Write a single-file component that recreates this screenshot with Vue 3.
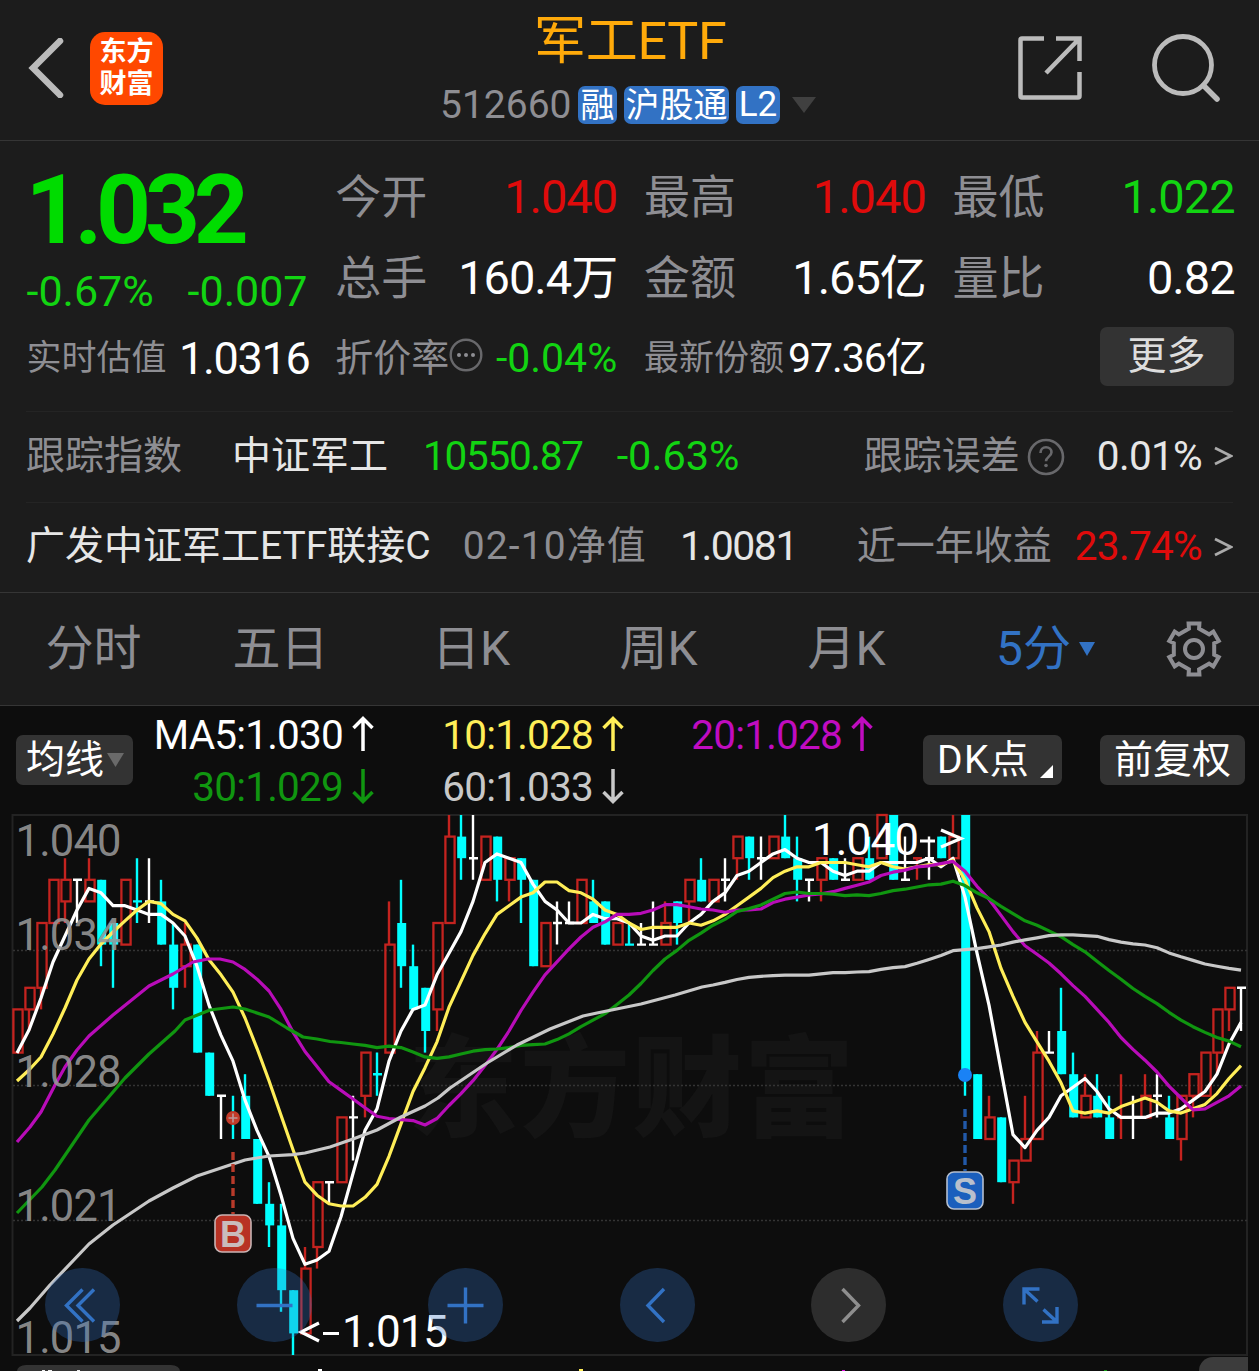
<template>
  <div class="page">
    <!-- Header -->
    <header class="header">
      <div class="header-left">
        <svg class="back" width="36" height="60" viewBox="0 0 36 60">
          <path d="M32 3L5 30l27 27" fill="none" stroke="#bbb" stroke-width="6.5" stroke-linecap="round" />
        </svg>
        <div class="logo"><span>东方</span><span>财富</span></div>
      </div>
      <div class="header-title">
        <h1>军工ETF</h1>
        <div class="code-row">
          <span class="code">512660</span>
          <span class="badge one">融</span>
          <span class="badge three">沪股通</span>
          <span class="badge two">L2</span>
          <svg class="title-arrow" width="24" height="16" viewBox="0 0 24 16">
            <path d="M0 0h24L12 16z" fill="#404040" />
          </svg>
        </div>
      </div>
      <div class="header-right">
        <svg width="66" height="66" viewBox="0 0 66 66" fill="none" stroke="#bbb" stroke-width="4.500">
          <path d="M27 3.500H5a1.500 1.500 0 0 0-1.500 1.500v56a1.500 1.500 0 0 0 1.500 1.500h56a1.500 1.500 0 0 0 1.500-1.500V37" />
          <path d="M39 3.500h23.500V26M61.500 4.500L29 38" />
        </svg>
        <svg width="70" height="70" viewBox="0 0 70 70" fill="none" stroke="#bbb" stroke-width="4.800">
          <circle cx="32" cy="32" r="28.500" />
          <path d="M52.500 52.500L66 66" stroke-width="5.500" stroke-linecap="round" />
        </svg>
      </div>
    </header>

    <!-- Quote -->
    <section class="quote">
      <div class="price-box">
        <div class="price">1.032</div>
        <div class="change"><span>-0.67%</span><span>-0.007</span></div>
      </div>
      <div v-for="item in stats" :key="item.label" class="cell">
        <span class="label">{{ item.label }}</span>
        <span class="value" :class="item.color">{{ item.value }}</span>
      </div>
      <div class="cell small">
        <span class="label">实时估值</span>
        <span class="value estimate">1.0316</span>
      </div>
      <div class="cell small">
        <span class="label discount">折价率</span>
        <svg class="more-icon" width="34" height="34" viewBox="0 0 34 34">
          <circle cx="17" cy="17" r="15.300" fill="none" stroke="#68686b" stroke-width="2.400" />
          <g fill="#8e8e93">
            <circle cx="10" cy="17" r="2" />
            <circle cx="17" cy="17" r="2" />
            <circle cx="24" cy="17" r="2" />
          </g>
        </svg>
        <span class="value green rate">-0.04%</span>
      </div>
      <div class="cell small">
        <span class="label">最新份额</span>
        <span class="value share">97.36亿</span>
      </div>
      <div class="cell end"><button class="more-btn">更多</button></div>
    </section>

    <section class="fund">
      <div class="fund-row">
        <span class="gray">跟踪指数</span>
        <span class="index-name">中证军工</span>
        <span class="green index-value">10550.87</span>
        <span class="green index-change">-0.63%</span>
        <span class="gray push">跟踪误差</span>
        <svg class="help" width="38" height="38" viewBox="0 0 38 38" fill="none">
          <circle cx="19" cy="19" r="17" stroke="#68686b" stroke-width="2.600" />
          <path d="M13.500 15c0-3.500 2.200-5.700 5.500-5.700s5.500 2.100 5.500 5c0 4.200-5.500 4.500-5.500 9" stroke="#68686b" stroke-width="2.600" />
          <circle cx="19" cy="27.500" r="1.800" fill="#68686b" />
        </svg>
        <span class="error-value">0.01%</span>
        <svg class="chevron" width="19" height="20" viewBox="0 0 19 20">
          <path d="M1 2l16 8-16 8" fill="none" stroke="#aaa" stroke-width="2.800" />
        </svg>
      </div>
      <div class="fund-row last">
        <span class="fund-name">广发中证军工ETF联接C</span>
        <span class="gray nav-date">02-10净值</span>
        <span class="nav">1.0081</span>
        <span class="gray push">近一年收益</span>
        <span class="red year-value">23.74%</span>
        <svg class="chevron" width="19" height="20" viewBox="0 0 19 20">
          <path d="M1 2l16 8-16 8" fill="none" stroke="#aaa" stroke-width="2.800" />
        </svg>
      </div>
    </section>

    <!-- Period tabs -->
    <nav class="tabs">
      <span v-for="tab in tabs" :key="tab" class="tab" :class="{ active: tab === activeTab }" @click="activeTab = tab">
        {{ tab }}
        <svg v-if="tab === '5分'" width="16" height="14" viewBox="0 0 16 14">
          <path d="M0 0h16L8 14z" fill="currentColor" />
        </svg>
      </span>
      <span class="tab">
        <svg width="58" height="58" viewBox="-29 -29 58 58" fill="none" stroke="#8e8e93" stroke-width="4">
          <path :d="gearPath" />
          <circle r="9" />
        </svg>
      </span>
    </nav>

    <!-- Moving average legend -->
    <section class="legend">
      <button class="chip ma-chip">
        均线
        <svg width="17" height="14" viewBox="0 0 17 14"><path d="M0 0h17L8.500 14z" fill="#6a6a6a" /></svg>
      </button>
      <div class="ma-grid">
        <span v-for="ma in legend" :key="ma.text" class="ma" :class="ma.cls">
          {{ ma.text }}
          <svg width="22" height="36" viewBox="0 0 22 36" fill="none" stroke="currentColor" stroke-width="3.500">
            <path :d="ma.up ? 'M11 35V3M1.500 12L11 2.500 20.500 12' : 'M11 1v32M1.500 24L11 33.500 20.500 24'" />
          </svg>
        </span>
      </div>
      <button class="chip dk-chip">
        DK点
        <svg width="13" height="13" viewBox="0 0 13 13"><path d="M13 0v13H0z" fill="#fff" /></svg>
      </button>
      <button class="chip adjust-chip">前复权</button>
    </section>

    <!-- K line chart -->
    <section class="chart">
      <svg class="plot" width="1259" height="571" viewBox="0 800 1259 571">
        <text class="watermark" x="408" y="1128" textLength="446">东方财富</text>
        <g fill="none" stroke="#232323" stroke-width="2">
          <rect x="12.500" y="815" width="1234.500" height="540" />
          <g stroke="#343434" stroke-width="1.300" stroke-dasharray="2 2">
            <path d="M13 950.500H1247M13 1085.500H1247M13 1220.500H1247" />
          </g>
        </g>

        <g v-for="(c, i) in bars" :key="i" :stroke="c.color" fill="none">
          <path v-if="c.flat" :d="`M${c.x} ${c.high}V${c.low}M${c.x - 4} ${c.top}h9`" stroke-width="2.400" />
          <template v-else-if="c.up">
            <path :d="`M${c.x} ${c.high}V${c.top}M${c.x} ${c.bottom}V${c.low}`" stroke-width="2.400" />
            <rect :x="c.x - 3.600" :y="c.top" width="9.200" :height="c.bottom - c.top" stroke-width="2.300" />
          </template>
          <template v-else>
            <path :d="`M${c.x} ${c.high}V${c.low}`" stroke-width="2.400" />
            <rect :x="c.x - 3.800" :y="c.top" width="9" :height="c.bottom - c.top" :fill="c.color" stroke="none" />
          </template>
        </g>

        <polyline
          v-for="line in maLines"
          :key="line.color"
          :points="line.points"
          fill="none"
          :stroke="line.color"
          stroke-width="3.200"
          stroke-linejoin="round"
        />

        <!-- Buy / sell marks -->
        <g>
          <circle cx="233" cy="1118" r="7" fill="#c23b29" />
          <path d="M228.500 1118h9M233 1113.500v9" stroke="#b99" stroke-width="1.600" />
          <path d="M233 1152v62" stroke="#b83a2a" stroke-width="3.400" stroke-dasharray="8 4" />
          <rect x="215" y="1215" width="36" height="37" rx="7" fill="#b83224" stroke="#c9b4b4" stroke-width="1.600" />
          <text class="mark" x="233" y="1247" fill="#c9bcbc">B</text>
          <circle cx="965" cy="1075" r="7" fill="#1a82f5" />
          <path d="M965 1109v62" stroke="#2259a8" stroke-width="3.400" stroke-dasharray="8 4" />
          <rect x="947" y="1172" width="36" height="37" rx="7" fill="#1b5fbd" stroke="#b4bfd0" stroke-width="1.600" />
          <text class="mark" x="965" y="1204" fill="#b9c0cc">S</text>
        </g>

        <g class="axis">
          <text v-for="l in axis" :key="l.text" x="15.500" :y="l.y" textLength="106">{{ l.text }}</text>
        </g>

        <g class="extreme">
          <text x="812" y="855" textLength="107">1.040</text>
          <text x="342" y="1347" textLength="106">1.015</text>
          <g fill="none" stroke="#fff" stroke-width="3.200">
            <path d="M920 841h15M941 830l20 8.500-20 8.500" />
            <path d="M323 1333.500h16M319 1323l-18 9 18 9" />
          </g>
        </g>

        <!-- Top of the volume pane -->
        <g>
          <path d="M17 1371a9 6 0 0 1 9-6h145a9 6 0 0 1 9 6z" fill="#333" />
          <path d="M1199 1371a14 14 0 0 1 14-14h35v14z" fill="#3c3c3c" />
          <path d="M42 1370.500h3M48 1370.500h4M77 1370.500h3" stroke="#eee" />
          <path d="M318 1370h4" stroke="#fff" stroke-width="2" />
          <path d="M579 1370h4" stroke="#ffee58" stroke-width="2" />
          <path d="M842 1370.500h3" stroke="#e010e0" />
          <path d="M1104 1370.500h3" stroke="#109610" />
        </g>
      </svg>

      <div class="controls">
        <button v-for="(d, i) in controls" :key="i" :class="{ muted: i === 4 }">
          <svg width="75" height="75" viewBox="-37.500 -37.500 75 75" fill="none" stroke="currentColor" stroke-width="3.400">
            <path :d="d" />
          </svg>
        </button>
      </div>
    </section>
  </div>
</template>

<script setup>
import { ref } from 'vue'

const stats = [
  { label: '今开', value: '1.040', color: 'red' },
  { label: '最高', value: '1.040', color: 'red' },
  { label: '最低', value: '1.022', color: 'green' },
  { label: '总手', value: '160.4万' },
  { label: '金额', value: '1.65亿' },
  { label: '量比', value: '0.82' }
]

const tabs = ['分时', '五日', '日K', '周K', '月K', '5分']
const activeTab = ref('5分')

const legend = [
  { text: 'MA5:1.030', cls: 'ma5', up: true },
  { text: '10:1.028', cls: 'ma10', up: true },
  { text: '20:1.028', cls: 'ma20', up: true },
  { text: '30:1.029', cls: 'ma30', up: false },
  { text: '60:1.033', cls: 'ma60', up: false }
]

const axis = [
  { text: '1.040', y: 856 },
  { text: '1.034', y: 949.5 },
  { text: '1.028', y: 1086.5 },
  { text: '1.021', y: 1220.5 },
  { text: '1.015', y: 1352.5 }
]

const controls = [
  'M0 -16L-16 0L0 16M11.500 -16L-4.500 0L11.500 16',
  'M-18 0H18',
  'M-18 0H18M0 -18V18',
  'M6.500 -16.500L-9.500 0L6.500 16.500',
  'M-6 -16.500L10 0L-6 16.500',
  'M-16.500 -1V-16.500H-1M-16.500 -16.500L-3 -4M3 4L16.500 16.500M16.500 1.500V16.500H1.500'
]

// six-tooth gear outline
const gearPath = (() => {
  const pts = []
  for (let k = 0; k < 6; k++) {
    const a = k * 60 - 90
    ;[[-20, 20.5], [-14, 21], [-12, 26], [12, 26], [14, 21], [20, 20.5]].forEach(([d, r]) => {
      const t = ((a + d) * Math.PI) / 180
      pts.push(`${(r * Math.cos(t)).toFixed(2)} ${(r * Math.sin(t)).toFixed(2)}`)
    })
  }
  return `M${pts.join('L')}Z`
})()

// 5 minute bars: open, close, high, low in thousandths above 1.000
const candles = [
  [29, 31, 31, 29], [31, 32, 32, 30], [32, 35, 35, 31], [35, 37, 37, 35], [36, 37, 38, 35],
  [37, 37, 37, 35], [36, 37, 38, 36], [37, 34, 37, 33], [35, 34, 35, 32], [34, 37, 37, 34],
  [36, 36, 38, 35], [36, 36, 38, 35], [36, 34, 37, 34], [34, 32, 35, 31], [33, 34, 35, 32],
  [34, 29, 34, 29], [29, 27, 29, 27], [27, 27, 27, 25], [26, 26, 27, 25], [27, 25, 28, 25],
  [25, 22, 25, 22], [22, 21, 23, 20], [21, 18, 22, 17], [18, 16, 18, 15], [16, 19, 20, 16],
  [20, 23, 23, 19], [23, 23, 23, 22], [23, 26, 26, 23], [26, 26, 27, 24], [27, 29, 29, 26],
  [28, 28, 29, 27], [29, 34, 36, 29], [35, 33, 37, 32], [33, 31, 34, 31], [32, 30, 32, 29],
  [31, 35, 35, 30], [35, 39, 40, 35], [39, 38, 40, 37], [38, 38, 40, 37], [37, 39, 39, 37],
  [39, 37, 39, 36], [37, 38, 38, 36], [38, 37, 38, 35], [37, 33, 37, 33], [33, 35, 35, 33],
  [35, 35, 36, 34], [35, 35, 36, 35], [35, 37, 37, 35], [36, 35, 37, 35], [36, 34, 36, 34],
  [34, 35, 35, 34], [34, 34, 35, 34], [34, 34, 35, 34], [34, 34, 36, 34], [34, 35, 36, 34],
  [36, 35, 36, 34], [36, 37, 37, 35], [37, 36, 38, 36], [36, 37, 37, 36], [37, 37, 38, 36],
  [38, 39, 39, 37], [39, 38, 39, 37], [38, 38, 39, 37], [38, 39, 39, 38], [39, 38, 40, 38],
  [38, 37, 39, 36], [37, 37, 37, 36], [37, 38, 38, 36], [38, 37, 38, 37], [37, 37, 38, 37],
  [37, 38, 38, 37], [38, 37, 39, 37], [38, 40, 40, 38], [40, 37, 40, 37], [37, 37, 39, 37],
  [38, 38, 38, 37], [38, 38, 39, 37], [39, 38, 39, 38], [38, 39, 40, 38], [40, 28, 40, 27],
  [28, 25, 28, 25], [25, 26, 27, 25], [26, 23, 26, 23], [23, 24, 24, 22], [24, 25, 27, 24],
  [25, 29, 30, 25], [29, 29, 30, 29], [30, 28, 32, 28], [28, 26, 29, 26], [26, 27, 28, 26],
  [27, 26, 28, 26], [26, 25, 27, 25], [26, 26, 28, 25], [26, 26, 27, 25], [26, 27, 28, 26],
  [27, 27, 28, 26], [26, 25, 27, 25], [25, 27, 27, 24], [27, 28, 28, 26], [27, 29, 29, 27],
  [29, 31, 31, 28], [31, 32, 32, 30], [32, 32, 32, 30]
]

const xOf = (i) => 17 + i * 12
const yOf = (p) => +(815 + (40 - p) * 21.6).toFixed(1)

const bars = candles.map(([open, close, high, low], i) => {
  const prev = i ? candles[i - 1][1] : open
  const flat = open === close
  const up = flat ? close > prev : close > open
  let color = up ? '#c4231f' : '#00ffff'
  if (flat && close === prev) color = '#ffffff'
  return {
    x: xOf(i),
    flat,
    up,
    color,
    high: yOf(high),
    low: yOf(low),
    top: yOf(Math.max(open, close)),
    bottom: yOf(Math.min(open, close))
  }
})

// lead covers the part of each line whose window starts before the first bar
function average(n, color, lead) {
  const pts = lead.map((p) => p.join(','))
  for (let i = n - 1; i < candles.length; i++) {
    let sum = 0
    for (let k = i - n + 1; k <= i; k++) sum += candles[k][1]
    pts.push(`${xOf(i)},${yOf(sum / n)}`)
  }
  return { color, points: pts.join(' ') }
}

const maLines = [
  average(5, '#ffffff', [[17, 1053], [29, 1030], [41, 998], [53, 962]]),
  average(10, '#ffee58', [
    [17, 1081], [29, 1070], [41, 1057], [53, 1034], [65, 1008], [77, 980], [89, 959], [101, 944], [113, 932]
  ]),
  average(20, '#b80cb8', [
    [17, 1142], [30, 1127], [41, 1112], [55, 1085], [65, 1067], [77, 1050], [89, 1036], [113, 1015],
    [149, 986], [173, 974], [193, 962], [208, 959], [220, 959], [233, 962]
  ]),
  average(30, '#109610', [
    [17, 1213], [42, 1187], [55, 1170], [89, 1120], [113, 1092], [125, 1078], [149, 1054], [175, 1031],
    [185, 1020], [210, 1010], [233, 1007], [245, 1009], [269, 1017], [287, 1028], [303, 1037], [317, 1039],
    [330, 1041.5], [341, 1042.5], [353, 1044]
  ]),
  average(60, '#c8c8c8', [
    [17, 1321], [30, 1308], [50, 1285], [89, 1244], [113, 1225], [149, 1201], [173, 1188], [197, 1176],
    [233, 1164], [245, 1160], [269, 1156], [293, 1154.7], [305, 1153], [330, 1147], [353, 1139],
    [377, 1130], [401, 1117], [425, 1106], [438, 1098], [450, 1088], [487, 1063], [517, 1045],
    [550, 1029], [583, 1016], [597, 1013], [641, 1004], [675, 995], [702, 987], [713, 985]
  ])
]
</script>

<style>
body {
  background: #0d0d0d;
}
</style>

<style scoped>
.page {
  width: 1259px;
  height: 1371px;
  overflow: hidden;
  background: #0d0d0d;
  color: #fff;
  font-family: Roboto, "Noto Sans CJK SC", sans-serif;
  line-height: 1;
  white-space: nowrap;
}

button {
  border: 0;
  padding: 0;
  color: inherit;
  font: inherit;
  cursor: pointer;
}

svg {
  display: block;
  flex-shrink: 0;
}

.red {
  color: #e00b0b;
}

.green {
  color: #12d412;
}

.gray {
  color: #8e8e93;
}

/* Header */
.header {
  display: grid;
  grid-template-columns: 400px 1fr 400px;
  height: 141px;
  box-sizing: border-box;
  border-bottom: 1px solid #353535;
  background: #1c1c1c;
}

.header-left {
  display: flex;
  align-items: center;
  padding-left: 28px;
  height: 136px;
}

.logo {
  display: flex;
  flex-direction: column;
  justify-content: center;
  align-items: center;
  gap: 5px;
  width: 73px;
  height: 73px;
  margin-left: 26px;
  border-radius: 15px;
  background: #ff4800;
  font-size: 27px;
  font-weight: 700;
}

.header-title {
  display: flex;
  flex-direction: column;
  padding-left: 40px;
}

h1 {
  margin: 14px 0 0 94px;
  color: #ffaa0a;
  font-size: 52px;
  font-weight: 400;
  line-height: 56px;
  letter-spacing: -0.3px;
}

.code-row {
  display: flex;
  align-items: center;
  height: 38px;
  margin-top: 16px;
}

.code {
  width: 138px;
  color: #8e8e93;
  font-size: 39px;
}

.badge {
  height: 38px;
  margin-right: 7px;
  border-radius: 7px;
  background: #3272c4;
  font-size: 34px;
  line-height: 38px;
  text-align: center;
}

.badge.one {
  width: 39px;
}

.badge.three {
  width: 105px;
}

.badge.two {
  width: 44px;
  font-size: 35px;
}

.title-arrow {
  margin-left: 5px;
}

.header-right {
  display: flex;
  align-items: center;
  justify-content: flex-end;
  gap: 68px;
  height: 135px;
  padding-right: 38px;
}

/* Quote */
.quote {
  display: grid;
  grid-template-columns: repeat(4, 281px);
  grid-template-rows: 81px 81px 80px;
  column-gap: 27.7px;
  height: 270px;
  box-sizing: border-box;
  padding: 15px 0 0 26.5px;
  background: #1c1c1c;
}

.price-box {
  grid-row: 1 / 3;
  color: #12d412;
}

.price {
  margin: 6px 0 0 -1px;
  color: #00dc00;
  font-size: 96px;
  font-weight: 700;
  line-height: 96px;
  letter-spacing: -6.2px;
}

.change {
  display: flex;
  justify-content: space-between;
  margin-top: 12px;
  font-size: 43px;
}

.cell {
  display: flex;
  align-items: center;
  justify-content: space-between;
}

.cell.end {
  justify-content: flex-end;
}

.label {
  color: #8e8e93;
  font-size: 46px;
}

.value {
  margin-right: -1px;
  font-size: 47px;
  letter-spacing: -1px;
}

.small .label {
  font-size: 35px;
}

.small .label.discount {
  font-size: 38px;
}

.small .value {
  font-size: 41px;
}

.small .value.estimate {
  margin-right: -2px;
  font-size: 45px;
  letter-spacing: -1.3px;
}

.small .value.rate {
  margin-right: -1px;
  letter-spacing: 0;
}

.more-icon {
  margin: 0 auto 7px 0;
}

.more-btn {
  width: 134px;
  height: 59px;
  margin-bottom: 4px;
  border-radius: 7px;
  background: #333;
  color: #ddd;
  font-size: 39px;
}

/* Fund rows */
.fund {
  padding: 0 26px;
  background: #1c1c1c;
  color: #e6e6e6;
  font-size: 39px;
}

.fund-row {
  display: flex;
  align-items: center;
  height: 91px;
  box-sizing: border-box;
  padding-bottom: 2px;
  border-top: 1px solid #242424;
}

.fund-row.last {
  height: 90px;
}

.index-name {
  margin-left: 50px;
}

.index-value {
  margin-left: 35px;
  font-size: 40.5px;
  letter-spacing: -1.3px;
}

.index-change {
  margin-left: 34px;
  font-size: 41.5px;
}

.push {
  margin-left: auto;
}

.help {
  margin: 2px 0 0 7px;
}

.error-value {
  margin-left: 32px;
  font-size: 40.5px;
  letter-spacing: -0.7px;
}

.nav-date {
  margin-left: 32px;
  letter-spacing: 1.1px;
}

.nav {
  margin-left: 33px;
  font-size: 41px;
  letter-spacing: -1.5px;
}

.year-value {
  margin-left: 23px;
  font-size: 40.5px;
  letter-spacing: -0.7px;
}

.chevron {
  margin-left: 12px;
}

/* Tabs */
.tabs {
  display: grid;
  grid-template-columns: 187px 187px 194px 181px 195px 203px 94px;
  height: 114px;
  box-sizing: border-box;
  border-top: 1px solid #353535;
  border-bottom: 1px solid #353535;
  background: #1c1c1c;
}

.tab {
  display: flex;
  align-items: center;
  justify-content: center;
  color: #8e8e93;
  font-size: 48px;
}

.tab.active {
  color: #3272c4;
}

.tab.active svg {
  margin-left: 8px;
}

/* Legend */
.legend {
  display: flex;
  height: 94px;
  padding-left: 16px;
}

.chip {
  display: flex;
  align-items: center;
  height: 50px;
  margin-top: 29px;
  box-sizing: border-box;
  border-radius: 7px;
  background: #333;
  font-size: 39px;
}

.ma-chip {
  width: 117px;
  padding-left: 10px;
  gap: 3px;
}

.ma-grid {
  display: grid;
  grid-template-columns: 241px 250px 249px;
  grid-template-rows: 52px 52px;
  width: 790px;
  margin-top: 3px;
}

.ma {
  display: flex;
  align-items: center;
  justify-content: flex-end;
  gap: 9px;
  font-size: 40.5px;
  letter-spacing: -0.8px;
}

.ma svg {
  margin-bottom: 2px;
}

.ma10 {
  color: #ffee58;
}

.ma20 {
  color: #c00cc0;
}

.ma30 {
  color: #109610;
}

.ma60 {
  color: #c8c8c8;
}

.dk-chip {
  width: 139px;
  padding-left: 14px;
  gap: 10px;
  letter-spacing: 1.4px;
}

.dk-chip svg {
  margin-top: 22px;
}

.adjust-chip {
  width: 145px;
  margin-left: 38px;
  justify-content: center;
}

/* Chart */
.chart {
  position: relative;
  height: 571px;
}

.watermark {
  fill: #141414;
  font-size: 110px;
  font-weight: 900;
}

.axis text {
  fill: #979797;
  fill-opacity: 0.9;
  font-size: 43.5px;
}

.extreme text {
  fill: #fff;
  font-size: 44px;
}

.mark {
  font-family: "Liberation Sans", sans-serif;
  font-size: 36px;
  font-weight: 700;
  text-anchor: middle;
}

.controls {
  position: absolute;
  left: 45px;
  top: 468px;
  display: flex;
  gap: 116.6px;
}

.controls button {
  width: 75px;
  height: 74px;
  overflow: hidden;
  border-radius: 37.5px;
  background: rgba(50, 114, 196, 0.3);
  color: #3272c4;
}

.controls button.muted {
  background: #2d2d2d;
  color: #8e8e8e;
}
</style>
